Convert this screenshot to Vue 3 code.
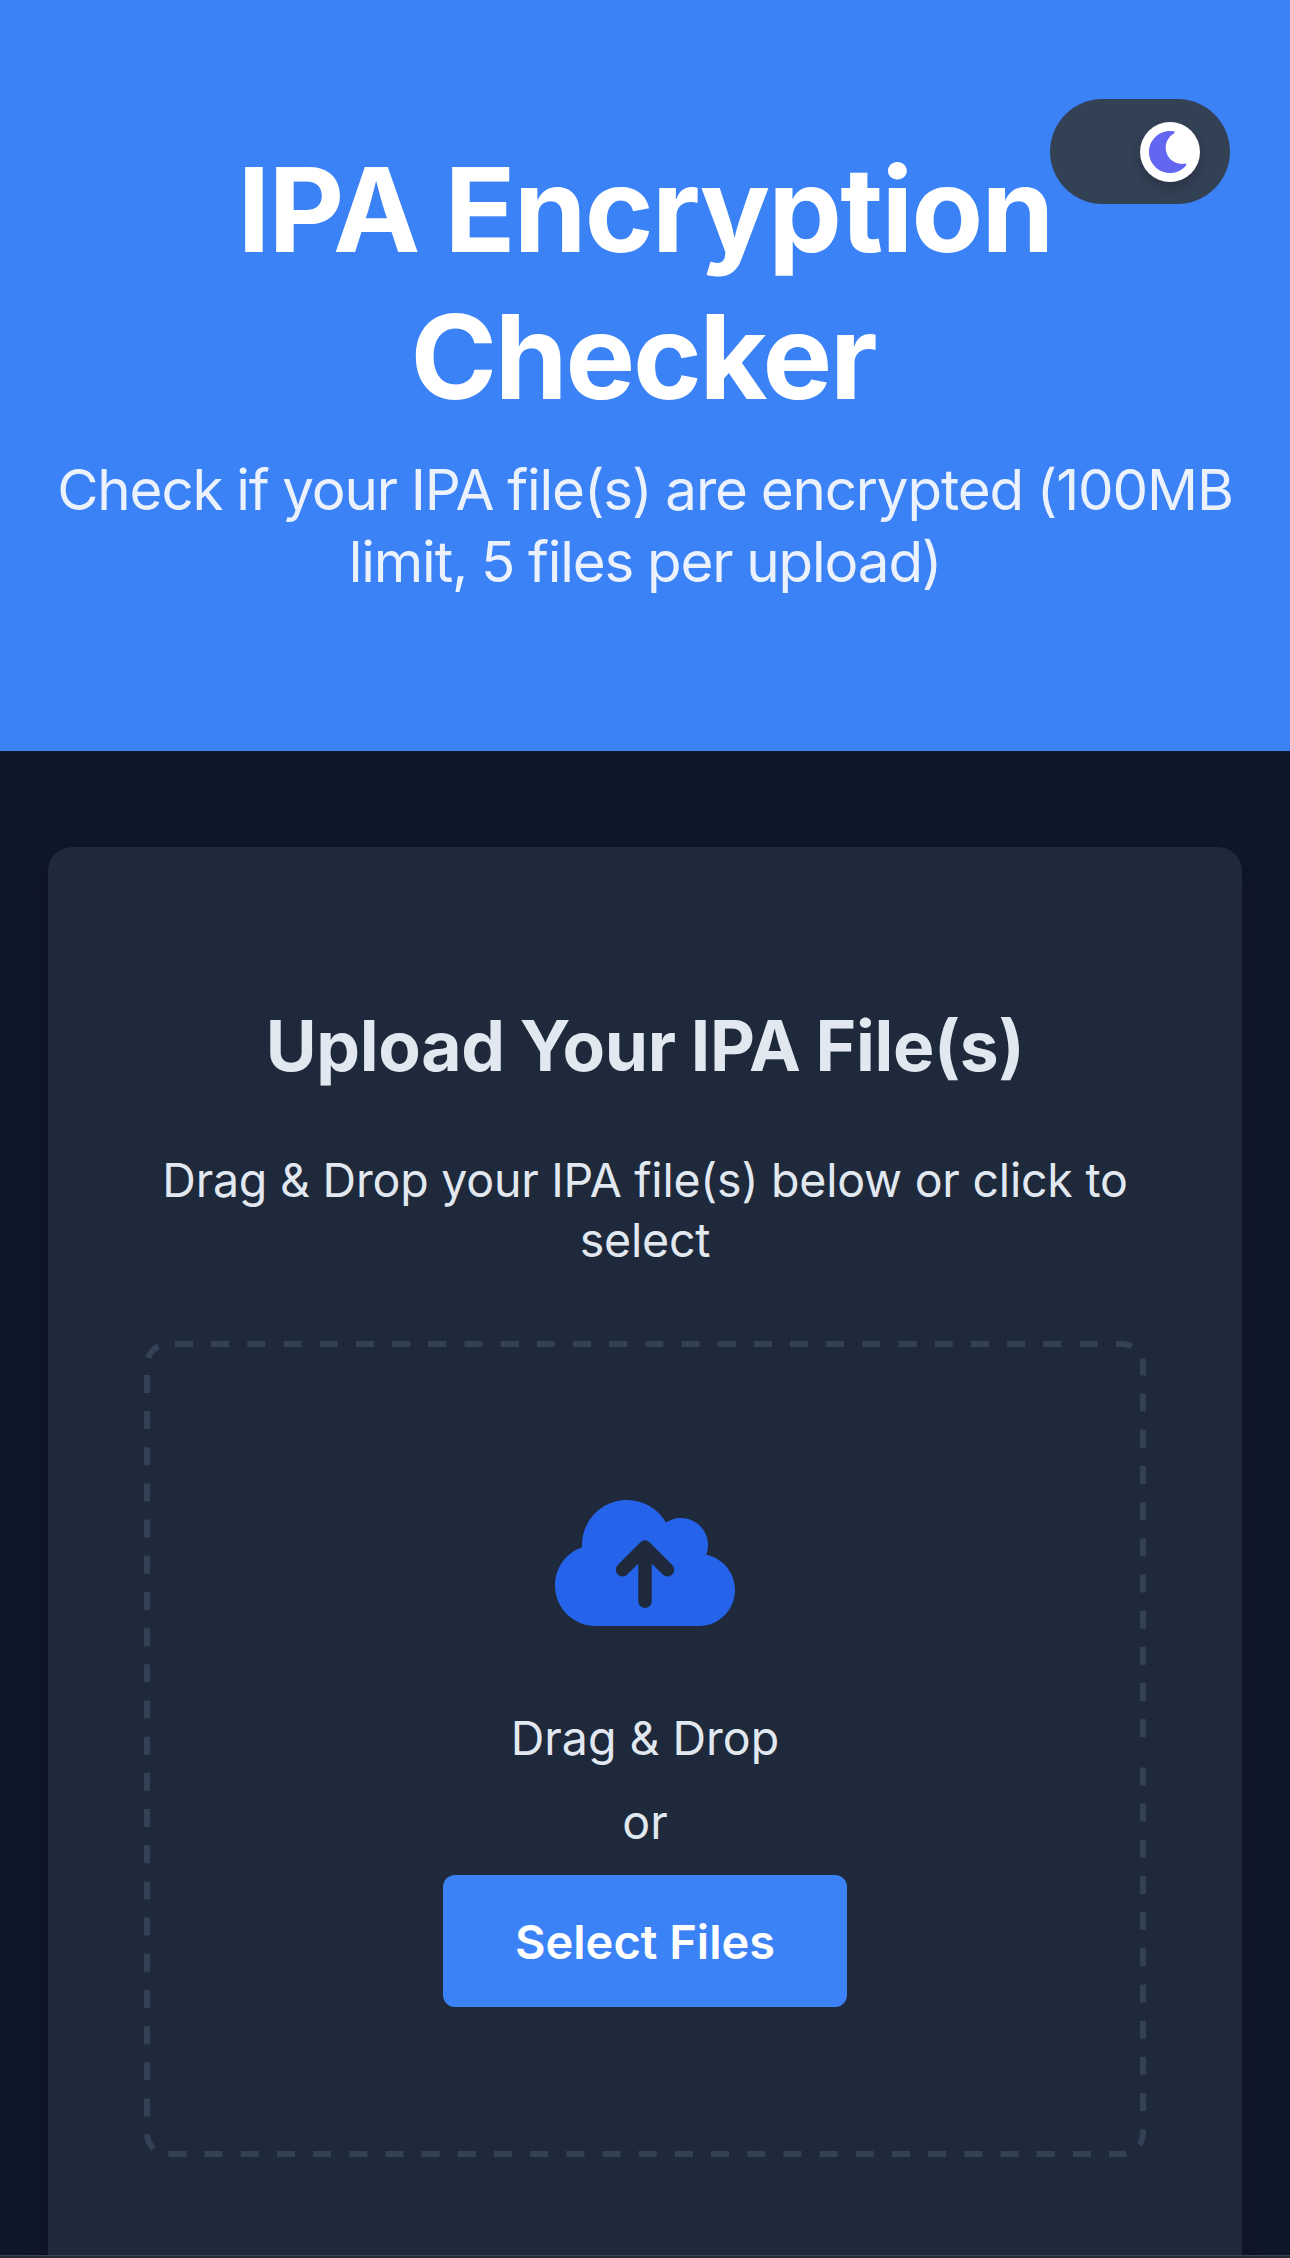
<script setup>
</script>

<template>
  <div class="page">
    <header class="hero">
      <button class="toggle" aria-label="Toggle dark mode">
        <span class="knob">
          <svg class="moon" viewBox="0 0 38 42"><path d="M21 0C9.400 0 0 9.400 0 21S9.400 42 21 42C27.300 42 33 39.200 37 34.400C37.700 33.500 37.300 32.400 36.200 32.600C35 32.800 33.900 32.900 32.700 32.900C23.800 32.900 16.700 25.700 16.700 16.800C16.700 10.700 20 5.300 24.900 2.500C26 1.900 25.800 .300 24.600 .200C23.400 .100 22.200 0 21 0Z" fill="#6366f1" /></svg>
        </span>
      </button>
      <h1><span class="title-top">IPA Encryption</span><br /><span class="title-bottom">Checker</span></h1>
      <p class="subtitle">Check if your IPA file(s) are encrypted (100MB<br />limit, 5 files per upload)</p>
    </header>

    <main class="card">
      <h2>Upload Your IPA File(s)</h2>
      <p class="hint">Drag &amp; Drop your IPA file(s) below or click to<br />select</p>
      <div class="drop">
        <svg class="outline" viewBox="0 0 1002 816" fill="none" stroke="#334155" stroke-width="12">
          <path d="M1002 408V792A24 24 0 0 1 978 816H24A24 24 0 0 1 0 792V24A24 24 0 0 1 24 0H978A24 24 0 0 1 1002 24V408" stroke-dasharray="18 18.18" stroke-dashoffset="17.78" />
        </svg>
        <svg class="cloud" viewBox="0 0 640 448"><path fill="#2563eb" d="M144 448C64.500 448 0 383.500 0 304C0 241.200 40.200 187.800 96.200 168.200C96.100 165.500 96 162.700 96 160C96 71.600 167.600 0 256 0C315.300 0 367 32.200 394.700 80.200C409.900 70 428.300 64 448 64C501 64 544 107 544 160C544 172.200 541.700 183.800 537.600 194.600C596 206.400 640 258.100 640 320C640 390.700 582.700 448 512 448Z" /><path d="M320 360V168M240 248L320 168L400 248" stroke="#1e293b" stroke-width="48" stroke-linecap="round" stroke-linejoin="round" fill="none" /></svg>
        <p class="dd">Drag &amp; Drop</p>
        <p class="or">or</p>
        <button class="select">Select Files</button>
      </div>
    </main>
    <div class="bottom-bar"></div>
  </div>
</template>

<style>
body { margin: 0; background: #0f172a; }
</style>

<style scoped>
* { box-sizing: border-box; }
h1, h2, p { margin: 0; white-space: nowrap; font-weight: 400; }
button { border: 0; padding: 0; font-family: inherit; }
.page { position: relative; width: 1290px; height: 2258px; overflow: hidden; background: #0f172a; color: #e2e8f0; font-family: Inter, "Liberation Sans", sans-serif; text-align: center; }
.hero { position: relative; height: 751px; padding-top: 136px; background: #3b82f6; color: #fff; }
h1 { font-size: 117px; line-height: 147px; font-weight: 700; }
.title-top { letter-spacing: -1.75px; }
.title-bottom { margin-right: 4px; letter-spacing: -2.2px; }
.subtitle { margin-top: 24px; font-size: 56.5px; line-height: 72px; letter-spacing: -1.15px; word-spacing: -.9px; opacity: .9; }
.toggle { position: absolute; top: 99px; right: 60px; width: 180px; height: 105px; border-radius: 53px; background: #334155; }
.knob { position: absolute; left: 90px; top: 23px; width: 60px; height: 60px; border-radius: 50%; background: #fff; box-shadow: 0 6px 12px rgba(0, 0, 0, .2); }
.moon { position: absolute; left: 9px; top: 9px; width: 38px; height: 42px; }
.card { margin: 96px 48px 0; height: 1500px; padding: 157px 96px 0; border-radius: 24px; background: #1e293b; box-shadow: 0 12px 24px rgba(15, 10, 30, .3); }
h2 { font-size: 69.5px; line-height: 84px; font-weight: 700; letter-spacing: -.35px; word-spacing: -1px; }
.hint { margin-top: 62px; font-size: 46.5px; line-height: 60px; letter-spacing: -.22px; }
.drop { position: relative; display: flex; flex-direction: column; align-items: center; margin-top: 71px; height: 816px; padding-top: 159px; }
.outline { position: absolute; inset: 0; width: 1002px; height: 816px; overflow: hidden; border-radius: 24px; }
.cloud { width: 180px; height: 126px; }
.dd { margin-top: 82px; font-size: 46.5px; line-height: 60px; }
.or { margin-top: 24px; font-size: 46.5px; line-height: 60px; }
.select { margin-top: 23px; width: 404px; height: 132px; padding-top: 1px; border-radius: 12px; background: #3b82f6; color: #fff; font-size: 47px; line-height: 60px; font-weight: 600; }
.bottom-bar { position: absolute; left: 0; right: 0; bottom: 0; height: 3px; background: #292c34; border-top: 1px solid #41424b; }
</style>
